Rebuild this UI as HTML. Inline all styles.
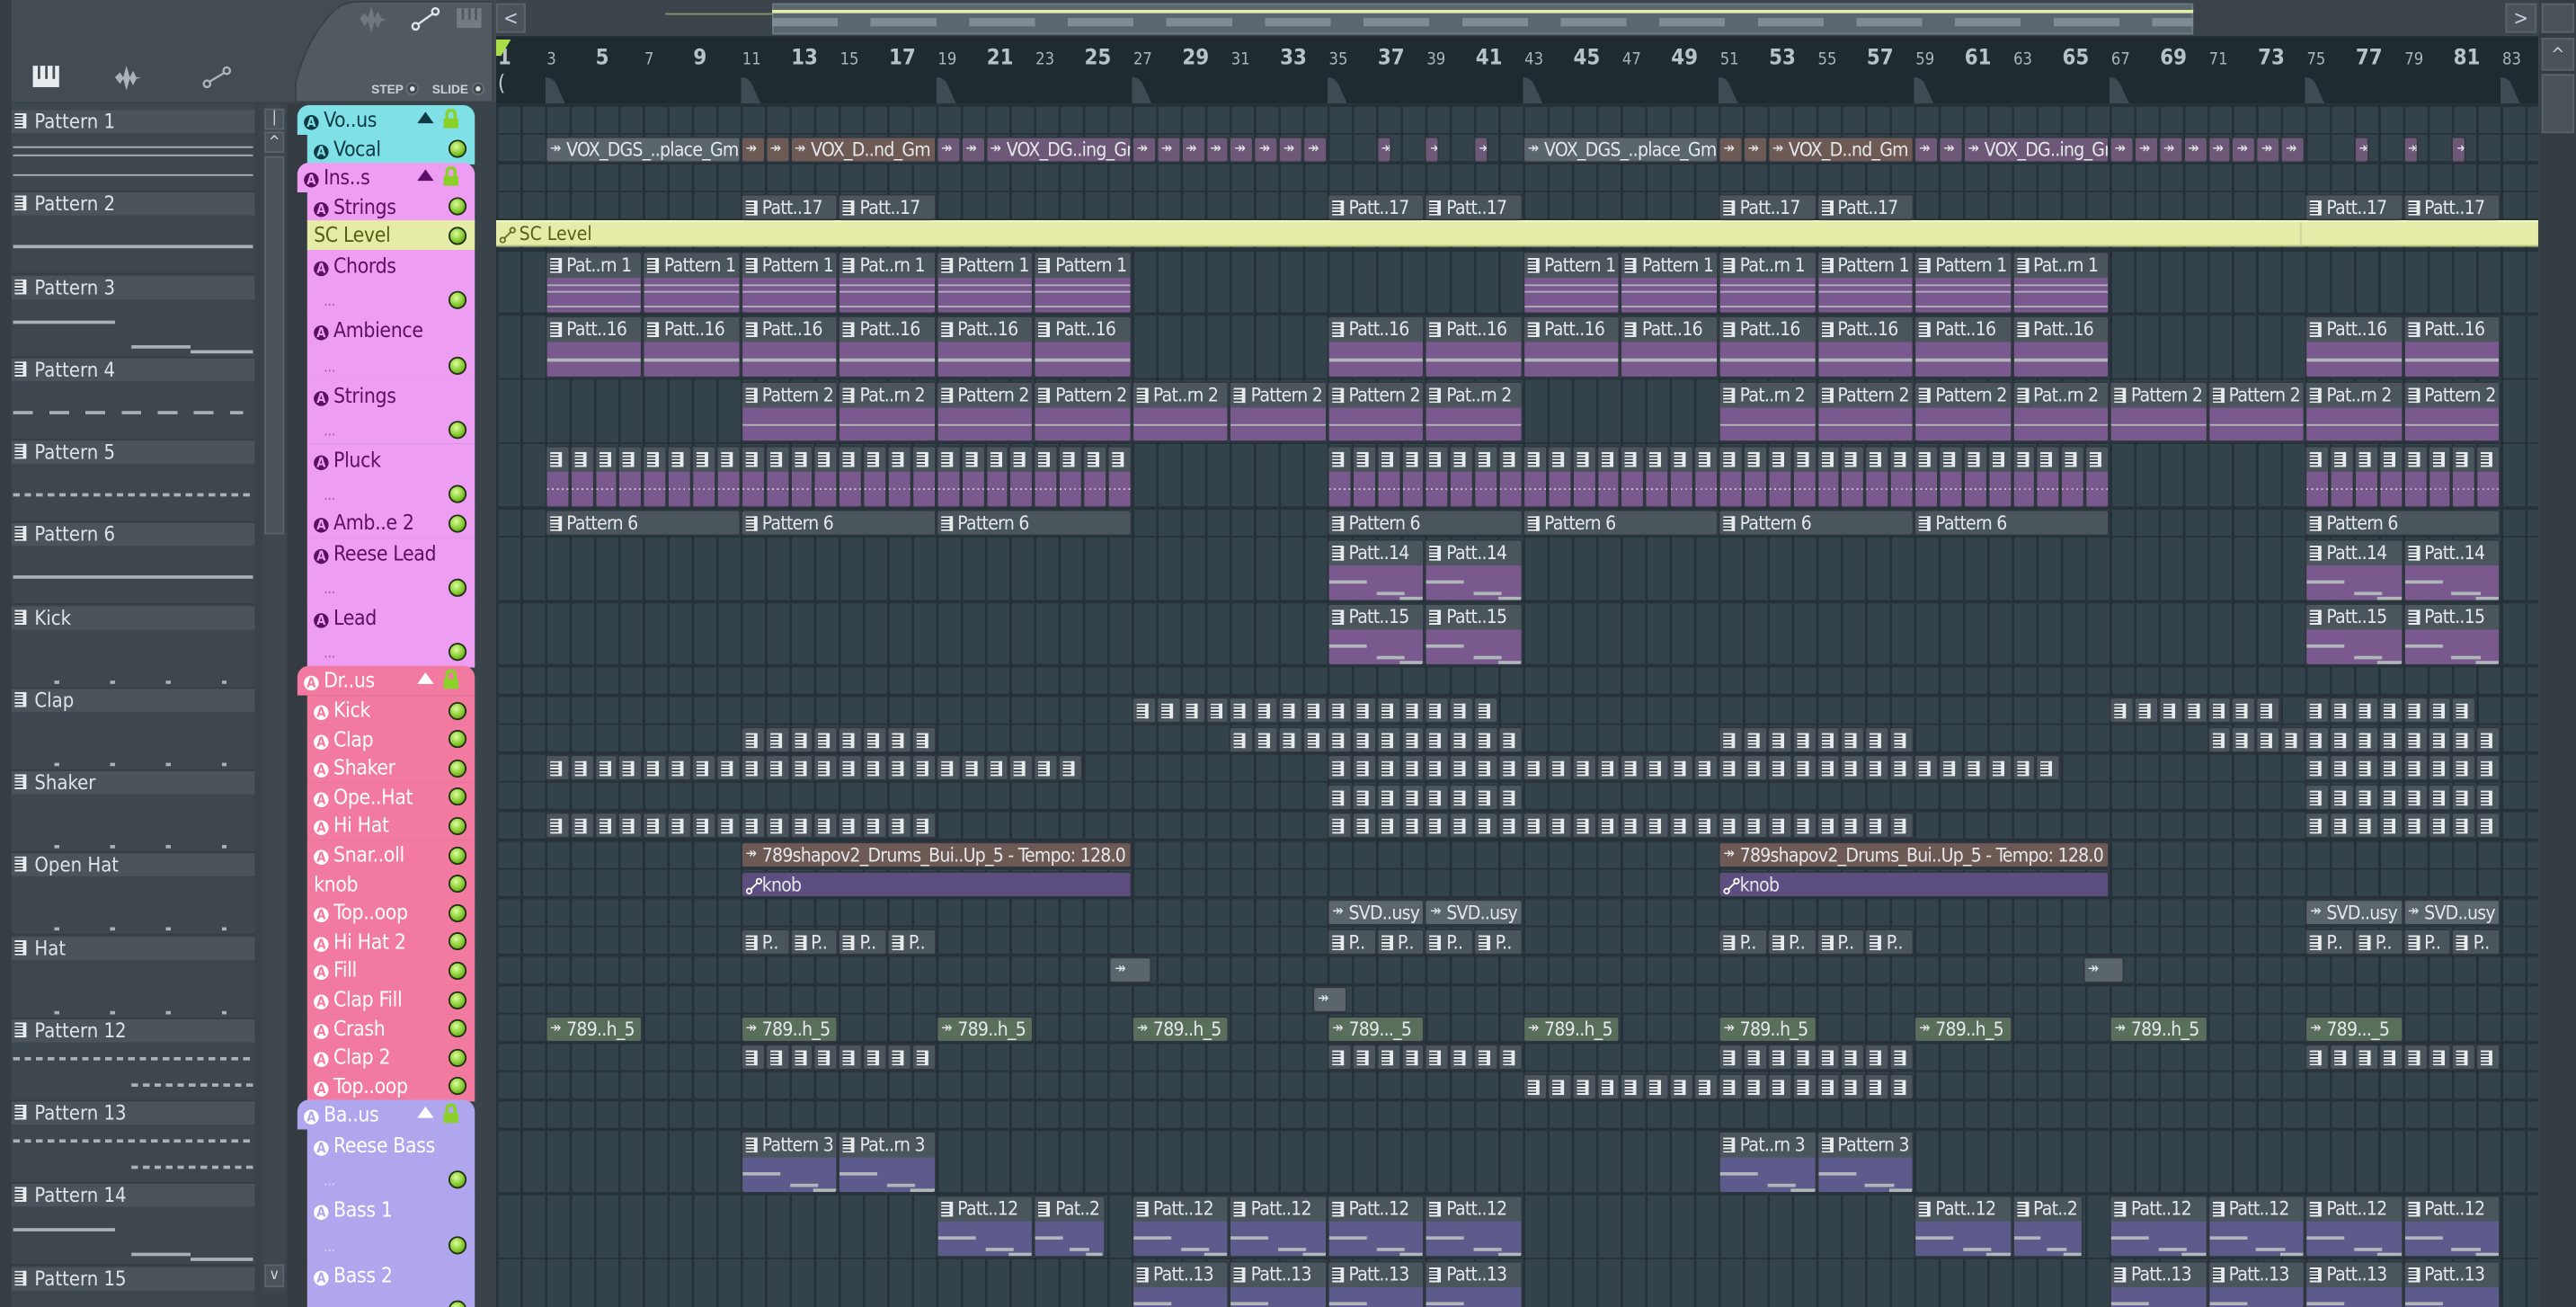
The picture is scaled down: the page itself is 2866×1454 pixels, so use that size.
<!DOCTYPE html>
<html><head><meta charset="utf-8">
<style>
html,body{margin:0;padding:0;background:#3a434a;overflow:hidden;width:2866px;height:1454px}
#app{position:absolute;left:0;top:0;width:1568px;height:795px;transform:scale(1.82781,1.82893);transform-origin:0 0;background:#3a434a;font-family:"Liberation Sans Narrow","DejaVu Sans Condensed","Liberation Sans",sans-serif;overflow:hidden}
.a{position:absolute}
.clip{position:absolute;box-sizing:border-box;border:1px solid #2f383e;border-radius:2px;overflow:hidden}
.ch{position:absolute;left:0;right:0;top:0;height:15px;background:#4b555c;color:#e4e8eb;font-size:11.5px;line-height:15px;white-space:nowrap;overflow:hidden;padding-left:12px;letter-spacing:-0.4px}
.pi{position:absolute;left:2px;top:3px;width:7px;height:9px;background:#e8ecef;background-image:repeating-linear-gradient(180deg,#e8ecef 0 1px,#3b444a 1px 2px);border-right:2px solid #e8ecef;box-sizing:border-box}
.tr{position:absolute;left:187px;width:102px;font-size:12.5px;color:#fff;box-sizing:border-box;padding-left:4px;letter-spacing:-0.2px}
.ab{display:inline-block;width:9px;height:9px;border-radius:50%;background:#fff;color:#000;font-size:8px;line-height:9px;text-align:center;margin-right:3px;vertical-align:0px;font-weight:bold;letter-spacing:0}
.led{position:absolute;right:5px;width:9px;height:9px;border-radius:50%;background:radial-gradient(circle at 40% 35%,#dcff9a,#7fc52a 60%,#4a7a12);border:1px solid #203010}
.pl{position:absolute;left:7px;width:148px;height:14px;background:#4b545b;color:#dfe3e6;font-size:12px;line-height:14px;padding-left:14px;box-sizing:border-box}
.pl .pi{left:2px;top:2px}
.num{position:absolute;color:#aab4bb;font-size:10px;top:31px}
.num.b{font-size:13px;font-weight:bold;top:28px;color:#b8c2c8}
</style></head><body><div id="app">
<div class="a" style="left:0;top:0;width:302px;height:62px;background:#444c53"></div>
<div class="a" style="left:0;top:0;width:7px;height:795px;background:#363e44"></div>
<svg class="a" style="left:0;top:0" width="302" height="64">
 <path d="M180 62 L180 50 Q188 20 205 5 Q210 1 220 1 L300 1 L300 62 Z" fill="#525a61" stroke="#3a4248"/>
 <g fill="#6f787f"><path d="M219 11 l3 -3 l2 3 l2 -7 l2 7 l2 -4 l2 4 l3 1 l-3 1 l-2 4 l-2 -4 l-2 7 l-2 -7 l-2 3 z"/></g>
 <g stroke="#e0e4e7" fill="none" stroke-width="1.3"><circle cx="253" cy="16" r="2"/><circle cx="265" cy="7" r="2"/><line x1="254.5" y1="14.7" x2="263.5" y2="8.3"/></g>
 <rect x="278" y="5" width="15" height="12" fill="#737c83"/><rect x="281" y="5" width="1.5" height="7" fill="#525a61"/><rect x="285" y="5" width="1.5" height="7" fill="#525a61"/><rect x="289" y="5" width="1.5" height="7" fill="#525a61"/>
 <text x="226" y="57" font-size="7.5" fill="#c9d0d5" font-family="Liberation Sans" font-weight="bold">STEP</text>
 <circle cx="251" cy="54" r="3.5" fill="#40484e" stroke="#666f76"/><circle cx="251" cy="54" r="1.5" fill="#dfe3e6"/>
 <text x="263" y="57" font-size="7.5" fill="#c9d0d5" font-family="Liberation Sans" font-weight="bold">SLIDE</text>
 <circle cx="291" cy="54" r="3.5" fill="#40484e" stroke="#666f76"/><circle cx="291" cy="54" r="1.5" fill="#dfe3e6"/>
 <g fill="#e8ecef"><rect x="20" y="40" width="16" height="13"/></g><g fill="#444c53"><rect x="23" y="40" width="1.5" height="8"/><rect x="27.5" y="40" width="1.5" height="8"/><rect x="32" y="40" width="1.5" height="8"/></g>
 <path d="M70 47 l3 -3 l2 3 l2 -7 l2 7 l2 -4 l2 4 l3 0 l-3 1 l-2 4 l-2 -4 l-2 7 l-2 -7 l-2 3 z" fill="#aab3ba"/>
 <g stroke="#aab3ba" fill="none" stroke-width="1.3"><circle cx="126" cy="51" r="2"/><circle cx="138" cy="43" r="2"/><line x1="127.5" y1="49.7" x2="136.5" y2="44.3"/></g>
</svg>
<div class="a" style="left:160px;top:64px;width:14px;height:722px;background:#3e474e"></div>
<div class="a" style="left:161px;top:66px;width:12px;height:13px;background:#4b545b;border:1px solid #5a636a;box-sizing:border-box;color:#ddd;font-size:9px;text-align:center;line-height:11px">|</div>
<div class="a" style="left:161px;top:80px;width:12px;height:13px;background:#4b545b;border:1px solid #5a636a;box-sizing:border-box;color:#ddd;font-size:9px;text-align:center;line-height:13px">^</div>
<div class="a" style="left:161px;top:95px;width:12px;height:230px;background:#4b545b;border:1px solid #5a636a;box-sizing:border-box"></div>
<div class="a" style="left:161px;top:769px;width:12px;height:14px;background:#4b545b;border:1px solid #5a636a;box-sizing:border-box;color:#ddd;font-size:9px;text-align:center;line-height:12px">v</div>
<div class="a" style="left:7px;top:63px;width:148px;height:730px;background:#3e474e"></div>
<div class="a" style="left:175px;top:63px;width:12px;height:732px;background:#343c42"></div>
<div class="a" style="left:302px;top:0;width:1243px;height:22px;background:#3c444b"></div>
<div class="a" style="left:302px;top:2px;width:18px;height:18px;background:#4a535a;border:1px solid #5a636a;box-sizing:border-box;color:#ccd;font-size:12px;text-align:center;line-height:16px">&lt;</div>
<div class="a" style="left:1525px;top:2px;width:19px;height:18px;background:#4a535a;border:1px solid #5a636a;box-sizing:border-box;color:#ccd;font-size:12px;text-align:center;line-height:16px">&gt;</div>
<div class="a" style="left:470px;top:2px;width:865px;height:19px;background:#5b676f;border:1px solid #6d7a82;box-sizing:border-box"></div>
<div class="a" style="left:405px;top:8px;width:65px;height:1px;background:#8a9070"></div>
<div class="a" style="left:470px;top:6px;width:865px;height:1.5px;background:#e6eeaa"></div>
<div class="a" style="left:470px;top:11px;width:865px;height:5px;background:repeating-linear-gradient(90deg,#7f8c94 0 40px,#5b676f 40px 60px)"></div>
<div class="a" style="left:1546px;top:0;width:22px;height:795px;background:#343c42"></div>
<div class="a" style="left:1547px;top:2px;width:20px;height:18px;background:#4a535a;border:1px solid #5a636a;box-sizing:border-box"></div>
<div class="a" style="left:1547px;top:23px;width:20px;height:20px;background:#4a535a;border:1px solid #5a636a;box-sizing:border-box;color:#ccd;font-size:11px;text-align:center;line-height:20px">^</div>
<div class="a" style="left:1547px;top:45px;width:20px;height:36px;background:#4a535a;border:1px solid #5a636a;box-sizing:border-box"></div>
<div class="a" style="left:302px;top:22px;width:1243px;height:41px;background:#1f2a31"></div>
<div class="a" style="left:302px;top:63px;width:1243px;height:732px;background-color:#34434b;background-image:repeating-linear-gradient(90deg,#25313a 0 1.5px,transparent 1.5px 14.88px)"></div>
</div>
<script>
var app=document.getElementById('app');
function el(h){var d=document.createElement('div');d.innerHTML=h;while(d.firstChild)app.appendChild(d.firstChild);}
var GX=302,BW=14.88;function bx(b){return GX+(b-1)*BW;}
var h='';
for(var n=1;n<=83;n+=2){var big=(n%4==1);h+='<div class="num'+(big?' b':'')+'" style="left:'+(bx(n)+1)+'px">'+n+'</div>';}
for(var n=3;n<=83;n+=8){var x=bx(n);h+='<svg class="a" style="left:'+x+'px;top:46px" width="16" height="17"><path d="M0 17 L0 1 Q5 1 7 6 L12 17 Z" fill="#3f4a52"/></svg>';}
h+='<svg class="a" style="left:302px;top:24px" width="10" height="12"><path d="M0 0 L9 0 L3 10 L0 10 Z" fill="#a9e04a"/></svg>';
h+='<div class="a" style="left:303px;top:44px;color:#c0c8cd;font-size:13px">(</div>';
el(h);
var R=[['Vo..us',1,'g','#80e0e8'],['Vocal',1,'c','#80e0e8'],['Ins..s',1,'g','#ee9ef2'],['Strings',1,'c','#ee9ef2'],['SC Level',1,'sc','#e4eca8'],['Chords',2,'c','#ee9ef2'],['Ambience',2,'c','#ee9ef2'],['Strings',2,'c','#ee9ef2'],['Pluck',2,'c','#ee9ef2'],['Amb..e 2',1,'c','#ee9ef2'],['Reese Lead',2,'c','#ee9ef2'],['Lead',2,'c','#ee9ef2'],
['Dr..us',1,'g','#f27aa0'],['Kick',1,'c','#f27aa0'],['Clap',1,'c','#f27aa0'],['Shaker',1,'c','#f27aa0'],['Ope..Hat',1,'c','#f27aa0'],['Hi Hat',1,'c','#f27aa0'],['Snar..oll',1,'c','#f27aa0'],['knob',1,'k','#f27aa0'],['Top..oop',1,'c','#f27aa0'],['Hi Hat 2',1,'c','#f27aa0'],['Fill',1,'c','#f27aa0'],['Clap Fill',1,'c','#f27aa0'],['Crash',1,'c','#f27aa0'],['Clap 2',1,'c','#f27aa0'],['Top..oop',1,'c','#f27aa0'],
['Ba..us',1,'g','#b0a6ee'],['Reese Bass',2,'c','#b0a6ee'],['Bass 1',2,'c','#b0a6ee'],['Bass 2',2,'c','#b0a6ee']];
var tops=[],y=64;
for(var i=0;i<R.length;i++){tops.push(y);y+=R[i][1]==2?39.3:17.6;}
tops.push(y);
var th='',gl='';
var dark={'#80e0e8':'#0e3a44','#ee9ef2':'#5a0f66','#e4eca8':'#5a5e10','#f27aa0':'#fff','#b0a6ee':'#fff'};
for(var i=0;i<R.length;i++){var r=R[i],t=tops[i],hh=tops[i+1]-t;
 var col=dark[r[3]];var left=r[2]=='g'?181:187;
 var rad=(r[2]=='g')?'border-top-left-radius:7px;border-top-right-radius:7px;':'';
 th+='<div class="tr" style="left:'+left+'px;width:'+(289-left)+'px;top:'+t+'px;height:'+(hh+0.5)+'px;background:'+r[3]+';color:'+col+';'+rad+'"><div style="position:absolute;top:'+(r[1]==2?2:1)+'px;left:4px;white-space:nowrap">'+((r[2]=='sc'||r[2]=='k')?'':'<span class="ab" style="background:'+col+';color:'+r[3]+'">A</span>')+r[0]+'</div>';
 if(r[2]=='g'){th+='<div style="position:absolute;left:73px;top:4px;width:0;height:0;border-left:5px solid transparent;border-right:5px solid transparent;border-bottom:7px solid '+col+'"></div><div style="position:absolute;left:90px;top:2px;width:7px;height:8px;border:2px solid #8ad12a;border-bottom:none;border-radius:4px 4px 0 0;box-sizing:border-box"></div><div style="position:absolute;left:89px;top:8px;width:9px;height:6px;background:#8ad12a"></div>';}
 else{th+='<div class="led" style="top:'+(hh-14)+'px"></div>';}
 if(r[1]==2){th+='<div style="position:absolute;left:10px;top:'+(hh-12)+'px;font-size:9px;opacity:.5">...</div>';}
 th+='</div>';
 gl+='<div class="a" style="left:302px;top:'+(t-1)+'px;width:1243px;height:1.5px;background:#26313a"></div>';
}
el(th+gl);
el('<div class="a" style="left:302px;top:134px;width:1243px;height:16px;background:#e4eca8;border-top:1px solid #f4f8c8;border-bottom:1px solid #b8c080;box-sizing:border-box;color:#5a5e1a;font-size:11.5px;line-height:14px;padding-left:14px">SC Level<div style="position:absolute;left:1098px;top:0;width:1px;height:14px;background:#cfd69a"></div><svg style="position:absolute;left:2px;top:3px" width="10" height="10"><g stroke="#6a6e22" fill="none"><circle cx="2" cy="8" r="1.5"/><circle cx="8" cy="2" r="1.5"/><line x1="3" y1="7" x2="7" y2="3"/></g></svg></div>');
var ch='';
function clip(ri,b,len,label,type){
 var t=tops[ri]+1,hh=tops[ri+1]-tops[ri]-1.5,x=bx(b),w=len*BW;
 var hb='#4b555c',body='#7a5a8e';
 if(type=='bass')body='#5d5a8c';
 if(type=='au'){hb='#5a656c';}
 if(type=='br'){hb='#6e5a55';}
 if(type=='pu'){hb='#6e5878';}
 if(type=='gr'){hb='#5a6e5c';}
 if(type=='kn'){hb='#5c4e7e';}
 var s='<div class="clip" style="left:'+x+'px;top:'+t+'px;width:'+w+'px;height:'+hh+'px;background:'+body+'">';
 s+='<div class="ch" style="background:'+hb+(label===''?';padding-left:0':'')+'">';
 if(type=='au'||type=='br'||type=='pu'||type=='gr')s+='<span style="position:absolute;left:2px;top:0;font-size:9px">&#x21A0;</span>';
 else if(type=='kn')s+='<svg style="position:absolute;left:2px;top:3px" width="10" height="10"><g stroke="#fff" fill="none"><circle cx="2" cy="8" r="1.5"/><circle cx="8" cy="2" r="1.5"/><line x1="3" y1="7" x2="7" y2="3"/></g></svg>';
 else s+='<span class="pi"></span>';
 s+=label+'</div>';
 if(hh>20){
  if(type=='line')s+='<div style="position:absolute;left:0;right:0;top:25px;height:1.5px;background:#b0b6ba"></div>';
  else if(type=='dot')s+='<div style="position:absolute;left:0;right:0;top:25px;height:1px;background:repeating-linear-gradient(90deg,#c8ccd0 0 1px,transparent 1px 3px)"></div>';
  else if(type=='ch')s+='<div style="position:absolute;left:0;right:0;top:19px;height:1px;background:#c0c4c8;opacity:.8"></div><div style="position:absolute;left:0;right:0;top:23px;height:1px;background:#c0c4c8;opacity:.8"></div><div style="position:absolute;left:0;right:0;top:32px;height:1px;background:#c0c4c8;opacity:.8"></div>';
  else s+='<div style="position:absolute;left:0;width:40%;top:24px;height:2px;background:#b0b6ba"></div><div style="position:absolute;left:50%;width:30%;top:31px;height:2px;background:#b0b6ba"></div><div style="position:absolute;left:75%;width:25%;top:34px;height:2px;background:#b0b6ba"></div>';
 }
 s+='</div>';ch+=s;
}
function seq(ri,from,to,step,labels,type){var k=0;for(var b=from;b<to;b+=step){clip(ri,b,step,labels[k%labels.length],type);k++;}}
clip(1,3,8,'VOX_DGS_..place_Gm','au');
seq(1,11,13,1,[''],'br');clip(1,13,6,'VOX_D..nd_Gm','br');
seq(1,19,21,1,[''],'pu');clip(1,21,6,'VOX_DG..ing_Gm','pu');seq(1,27,35,1,[''],'pu');
clip(1,37,0.6,'','pu');clip(1,39,0.6,'','pu');clip(1,41,0.6,'','pu');
clip(1,43,8,'VOX_DGS_..place_Gm','au');
seq(1,51,53,1,[''],'br');clip(1,53,6,'VOX_D..nd_Gm','br');
seq(1,59,61,1,[''],'pu');clip(1,61,6,'VOX_DG..ing_Gm','pu');seq(1,67,75,1,[''],'pu');
clip(1,77,0.6,'','pu');clip(1,79,0.6,'','pu');clip(1,81,0.6,'','pu');
[11,15,35,39,51,55,75,79].forEach(function(b){clip(3,b,4,'Patt..17','x');});
seq(5,3,27,4,['Pat..rn 1','Pattern 1','Pattern 1','Pat..rn 1','Pattern 1','Pattern 1'],'ch');
seq(5,43,67,4,['Pattern 1','Pattern 1','Pat..rn 1','Pattern 1','Pattern 1','Pat..rn 1'],'ch');
seq(6,3,27,4,['Patt..16'],'line');seq(6,35,67,4,['Patt..16'],'line');seq(6,75,83,4,['Patt..16'],'line');
seq(7,11,43,4,['Pattern 2','Pat..rn 2','Pattern 2','Pattern 2','Pat..rn 2','Pattern 2','Pattern 2','Pat..rn 2'],'line');
seq(7,51,83,4,['Pat..rn 2','Pattern 2','Pattern 2','Pat..rn 2','Pattern 2','Pattern 2','Pat..rn 2','Pattern 2'],'line');
seq(8,3,27,1,[''],'dot');seq(8,35,67,1,[''],'dot');seq(8,75,83,1,[''],'dot');
seq(9,3,27,8,['Pattern 6'],'x');seq(9,35,67,8,['Pattern 6'],'x');clip(9,75,8,'Pattern 6','x');
[35,39,75,79].forEach(function(b){clip(10,b,4,'Patt..14','bl');clip(11,b,4,'Patt..15','bl');});
seq(13,27,35,1,[''],'x');seq(13,35,42,1,[''],'x');seq(13,67,74,1,[''],'x');seq(13,75,82,1,[''],'x');
seq(14,11,19,1,[''],'x');seq(14,31,43,1,[''],'x');seq(14,51,59,1,[''],'x');seq(14,71,83,1,[''],'x');
seq(15,3,25,1,[''],'x');seq(15,35,65,1,[''],'x');seq(15,75,83,1,[''],'x');
seq(16,35,43,1,[''],'x');seq(16,75,83,1,[''],'x');
seq(17,3,19,1,[''],'x');seq(17,35,59,1,[''],'x');seq(17,75,83,1,[''],'x');
clip(18,11,16,'789shapov2_Drums_Bui..Up_5 - Tempo: 128.0','br');clip(18,51,16,'789shapov2_Drums_Bui..Up_5 - Tempo: 128.0','br');
clip(19,11,16,'knob','kn');clip(19,51,16,'knob','kn');
[35,39,75,79].forEach(function(b){clip(20,b,4,'SVD..usy','au');});
seq(21,11,19,2,['P..'],'x');seq(21,35,43,2,['P..'],'x');seq(21,51,59,2,['P..'],'x');seq(21,75,83,2,['P..'],'x');
clip(22,26.1,1.7,'','au');clip(22,65.9,1.7,'','au');
clip(23,34.4,1.4,'','au');
[3,11,19,27,35,43,51,59,67,75].forEach(function(b){clip(24,b,4,(b==35||b==75)?'789..._5':'789..h_5','gr');});
seq(25,11,19,1,[''],'x');seq(25,35,43,1,[''],'x');seq(25,51,59,1,[''],'x');seq(25,75,83,1,[''],'x');
seq(26,43,59,1,[''],'x');
clip(28,11,4,'Pattern 3','bass');clip(28,15,4,'Pat..rn 3','bass');clip(28,51,4,'Pat..rn 3','bass');clip(28,55,4,'Pattern 3','bass');
clip(29,19,4,'Patt..12','bass');clip(29,23,2.9,'Pat..2','bass');seq(29,27,43,4,['Patt..12'],'bass');
clip(29,59,4,'Patt..12','bass');clip(29,63,2.9,'Pat..2','bass');seq(29,67,83,4,['Patt..12'],'bass');
seq(30,27,43,4,['Patt..13'],'bass');seq(30,67,83,4,['Patt..13'],'bass');
el(ch);
var P=['Pattern 1','Pattern 2','Pattern 3','Pattern 4','Pattern 5','Pattern 6','Kick','Clap','Shaker','Open Hat','Hat','Pattern 12','Pattern 13','Pattern 14','Pattern 15'];
var ph='';
for(var i=0;i<P.length;i++){var t=67+i*50.25;
 ph+='<div class="pl" style="top:'+t+'px"><span class="pi"></span>'+P[i]+'</div>';
 ph+='<div class="a" style="left:7px;top:'+(t+15)+'px;width:148px;height:34px;background:#3e474e;border-bottom:1px solid #353d43"></div>';
 var yy=t+15;
 if(i==0){ph+='<div class="a" style="left:8px;top:'+(yy+7)+'px;width:146px;height:1px;background:#aab2b8"></div><div class="a" style="left:8px;top:'+(yy+12)+'px;width:146px;height:1px;background:#aab2b8"></div><div class="a" style="left:8px;top:'+(yy+24)+'px;width:146px;height:1px;background:#aab2b8"></div>';}
 else if(i==1||i==5){ph+='<div class="a" style="left:8px;top:'+(yy+17)+'px;width:146px;height:2px;background:#aab2b8"></div>';}
 else if(i==3){ph+='<div class="a" style="left:8px;top:'+(yy+17)+'px;width:140px;height:2px;background:repeating-linear-gradient(90deg,#aab2b8 0 12px,transparent 12px 22px)"></div>';}
 else if(i==4||i==11||i==12){ph+='<div class="a" style="left:8px;top:'+(yy+(i==4?17:8))+'px;width:146px;height:2px;background:repeating-linear-gradient(90deg,#aab2b8 0 4px,transparent 4px 7px)"></div>'+(i>4?'<div class="a" style="left:80px;top:'+(yy+24)+'px;width:74px;height:2px;background:repeating-linear-gradient(90deg,#aab2b8 0 4px,transparent 4px 7px)"></div>':'');}
 else if(i==2||i==13){ph+='<div class="a" style="left:8px;top:'+(yy+12)+'px;width:62px;height:2px;background:#aab2b8"></div><div class="a" style="left:80px;top:'+(yy+27)+'px;width:36px;height:2px;background:#aab2b8"></div><div class="a" style="left:116px;top:'+(yy+30)+'px;width:38px;height:2px;background:#aab2b8"></div>';}
 else {ph+='<div class="a" style="left:8px;top:'+(yy+30)+'px;width:146px;height:2px;background:repeating-linear-gradient(90deg,transparent 0 25px,#aab2b8 25px 28px,transparent 28px 34px)"></div>';}
}
el(ph);
</script>
</body></html>
